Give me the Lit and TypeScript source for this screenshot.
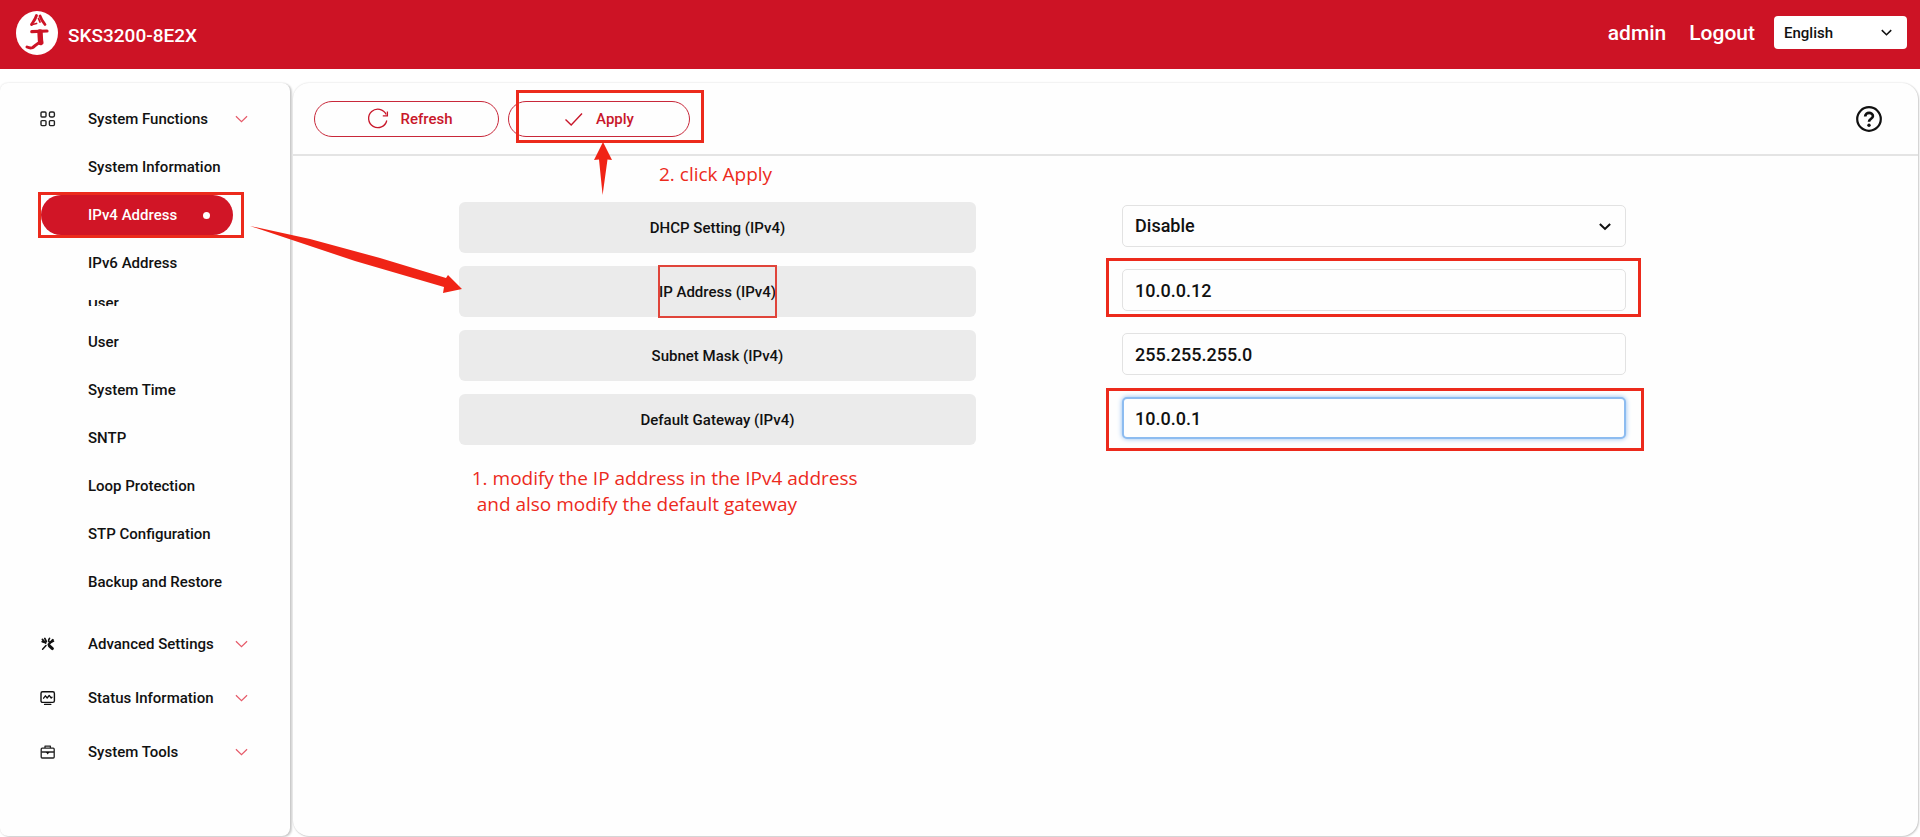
import { LitElement, html, css, svg, nothing } from "lit";
import { customElement, state } from "lit/decorators.js";
import { classMap } from "lit/directives/class-map.js";

interface NavItem {
  label: string;
  clipped?: boolean;
}

interface NavGroup {
  label: string;
  icon: unknown;
  items: NavItem[];
}

interface Field {
  id: string;
  label: string;
  value: string;
  options?: string[];
  mark?: "address" | "gateway";
  active?: boolean;
}

const gridIcon = svg`
  <g fill="none" stroke="#222" stroke-width="1.4">
    <rect x="1" y="1" width="5" height="5" rx="1"/><rect x="9.4" y="1" width="5" height="5" rx="1.4"/>
    <rect x="1" y="9.6" width="5" height="5" rx="1"/><rect x="9.4" y="9.6" width="5" height="5" rx="1"/>
  </g>`;
const toolsIcon = svg`
  <g fill="none" stroke="#111" stroke-linecap="round" stroke-linejoin="round">
    <path d="M2.6 13.2 6 9.6" stroke-width="1.5"/>
    <path d="M8.6 8.6 12.8 4" stroke-width="2.2"/>
    <path d="M9.6 2.2C8.4 3.6 8.4 5 9.2 6.2M13.6 5.2C12 6.4 11 6.4 10 6" stroke-width="1.5"/>
    <path d="M2.4 3.4 5.6 7M4.8 2.4 6.4 5.6M2.2 5.6 5.4 6.6" stroke-width="1.7"/>
    <path d="M9.4 9.8 12.4 12.6" stroke-width="3"/>
  </g>`;
const monitorIcon = svg`
  <g fill="none" stroke="#111" stroke-linecap="round" stroke-linejoin="round">
    <rect x="1" y="1.8" width="13.4" height="10.6" rx="1.6" stroke-width="1.4"/>
    <path d="M3.6 8.2 5.4 5.8 7.2 8 9.2 5.4 11.2 8 12 7.2" stroke-width="1.3"/>
    <path d="M4.6 14.4h6.2" stroke-width="1.4"/>
  </g>`;
const caseIcon = svg`
  <g fill="none" stroke="#222" stroke-linejoin="round">
    <rect x="1.2" y="4.2" width="13" height="9.8" rx="1" stroke-width="1.3"/>
    <path d="M5 4V2.2h5.4V4M1.4 8h12.6" stroke-width="1.3"/>
    <path d="M5.8 8h3.8L7.7 10.6Z" fill="#111" stroke="none"/>
  </g>`;

const chevron = (cls: string) => html`
  <svg class=${cls} viewBox="0 0 14 8" aria-hidden="true">
    <path d="M1 1 7 6.8 13 1" fill="none" stroke="currentColor" />
  </svg>`;

@customElement("app-root")
export class AppRoot extends LitElement {
  @state() private current = "IPv4 Address";

  private groups: NavGroup[] = [
    {
      label: "System Functions",
      icon: gridIcon,
      items: [
        { label: "System Information" },
        { label: "IPv4 Address" },
        { label: "IPv6 Address" },
        { label: "User", clipped: true },
        { label: "User" },
        { label: "System Time" },
        { label: "SNTP" },
        { label: "Loop Protection" },
        { label: "STP Configuration" },
        { label: "Backup and Restore" },
      ],
    },
    { label: "Advanced Settings", icon: toolsIcon, items: [] },
    { label: "Status Information", icon: monitorIcon, items: [] },
    { label: "System Tools", icon: caseIcon, items: [] },
  ];

  private fields: Field[] = [
    { id: "dhcp", label: "DHCP Setting (IPv4)", value: "Disable", options: ["Disable", "Enable"] },
    { id: "address", label: "IP Address (IPv4)", value: "10.0.0.12", mark: "address" },
    { id: "mask", label: "Subnet Mask (IPv4)", value: "255.255.255.0" },
    { id: "gateway", label: "Default Gateway (IPv4)", value: "10.0.0.1", mark: "gateway", active: true },
  ];

  static styles = css`
    :host {
      display: flex;
      flex-direction: column;
      min-height: 100vh;
      box-sizing: border-box;
      background: #fff;
      color: #111;
      font: 500 15px/20px Roboto, "Liberation Sans", sans-serif;
    }
    *, *::before, *::after { box-sizing: border-box; }
    button, input, select { font: inherit; color: inherit; }
    a { color: inherit; text-decoration: none; }
    svg { display: block; flex: none; overflow: visible; }

    .header {
      display: flex;
      align-items: center;
      height: 69px;
      padding: 0 13px 4px 16px;
      background: #cd1325;
      color: #fff;
      font-size: 21px;
      line-height: 24px;
    }
    .logo { width: 42px; height: 44px; }
    .model { margin: 0; padding: 6px 0 0 10px; font-size: 19px; font-weight: 500; }
    .account { display: flex; align-items: center; gap: 23px; margin-left: auto; }
    .language { position: relative; display: block; margin-left: -4px; color: #111; }
    .language select {
      display: block;
      width: 133px;
      height: 33px;
      padding: 0 10px;
      border: 0;
      border-radius: 4px;
      appearance: none;
      background: #fff;
      font-size: 15px;
    }
    .language .caret { position: absolute; right: 15px; top: 13px; width: 11px; height: 7px; stroke-width: 2; }

    .body { flex: 1; display: flex; gap: 3px; padding: 14px 2px 1px 0; }
    .sidebar {
      flex: none;
      width: 290px;
      padding: 9px 0;
      border-radius: 8px;
      background: #fefefe;
      box-shadow: 0 0 2px rgba(0, 0, 0, 0.15), 2px 1px 2px rgba(0, 0, 0, 0.18);
      white-space: nowrap;
    }
    .list { margin: 0; padding: 0; list-style: none; }
    .group {
      display: flex;
      align-items: center;
      width: 100%;
      height: 54px;
      padding: 0 42px 0 40px;
      border: 0;
      background: none;
      text-align: left;
    }
    .group svg:first-child { width: 16px; height: 16px; margin-right: 32px; }
    .group .caret { width: 13px; height: 8px; margin-left: auto; color: #e65a69; stroke-width: 1.3; }
    .list.items { margin-top: -3px; padding-bottom: 11px; }
    .item { display: flex; align-items: center; height: 48px; padding-left: 41px; }
    .link {
      position: relative;
      display: flex;
      align-items: center;
      justify-content: space-between;
      width: 192px;
      height: 40px;
      padding: 0 23px 0 47px;
      border-radius: 20px;
    }
    .link.current { background: #d11526; color: #fff; }
    .dot { width: 7px; height: 7px; border-radius: 50%; background: #fff; }
    .item.clipped { height: 31px; }
    .item.clipped .link { height: 6px; overflow: hidden; border-radius: 0; }

    .panel {
      flex: 1;
      min-width: 0;
      border-radius: 16px;
      background: #fefefe;
      box-shadow: 0 0 2px rgba(0, 0, 0, 0.15), 1px 1px 2px rgba(0, 0, 0, 0.18);
    }
    .toolbar {
      display: flex;
      align-items: center;
      gap: 9px;
      height: 73px;
      padding: 0 36px 0 21px;
      border-bottom: 2px solid #e4e4e4;
    }
    .action {
      display: flex;
      align-items: center;
      justify-content: center;
      gap: 12px;
      width: 182px;
      height: 36px;
      padding: 0;
      border: 1px solid #c8283a;
      border-radius: 18px;
      background: none;
      color: #c8172a;
    }
    .action.refresh { width: 185px; padding-left: 8px; }
    .action svg { width: 20px; height: 20px; }
    .marked { position: relative; }
    .help { margin-left: auto; padding: 0; border: 0; background: none; }
    .help svg { width: 26px; height: 26px; }

    .form {
      display: grid;
      gap: 13px;
      padding: 46px 18% 0 10.2%;
    }
    .row {
      display: grid;
      grid-template-columns: 517fr 503fr;
      column-gap: 12.5%;
      align-items: start;
    }
    .label {
      display: flex;
      align-items: center;
      justify-content: center;
      height: 51px;
      border-radius: 6px;
      background: #ebebeb;
    }
    .boxed {
      display: flex;
      align-items: center;
      height: 51px;
      outline: 2px solid #e0443a;
      outline-offset: -1px;
    }
    .control { position: relative; margin-top: 3px; font-size: 18px; }
    .control input, .control select {
      display: block;
      width: 100%;
      height: 42px;
      padding: 0 12px;
      border: 1px solid #e2e2e2;
      border-radius: 5px;
      outline: none;
      background: #fefefe;
      appearance: none;
    }
    .control .active { border: 2px solid #8dbcf0; padding: 0 11px; box-shadow: 0 0 5px #8dbcf0; }
    .control .caret { position: absolute; right: 15px; top: 18px; width: 12px; height: 7px; stroke-width: 2.4; }

    .mark { position: absolute; border: 3px solid #ec2a1c; pointer-events: none; }
    .mark.nav { inset: -3px -11px -3px -3px; }
    .mark.apply { inset: -11px -14px -6px 8px; }
    .mark.address { inset: -11px -15px -6px -16px; }
    .mark.gateway { inset: -9px -18px -12px -16px; }
    .arrow { position: absolute; z-index: 1; fill: #f02416; pointer-events: none; }
    .arrow.across { left: 209px; top: 31px; width: 213px; height: 68px; }
    .arrow.up { left: 86px; top: 41px; width: 18px; height: 53px; }
    .note {
      margin: 0;
      color: #ec2a1c;
      font: 400 19px/26px "Open Sans", "Noto Sans", sans-serif;
      white-space: pre;
    }
    .note.second { position: absolute; left: 151px; top: 60px; }
    .note.first { padding: 7px 0 0 13px; }
  `;

  private renderItem(item: NavItem) {
    const current = item.label === this.current;
    return html`
      <li class=${classMap({ item: true, clipped: !!item.clipped })}>
        <a
          class=${classMap({ link: true, current })}
          href="#"
          @click=${(e: Event) => {
            e.preventDefault();
            this.current = item.label;
          }}
        >
          <span>${item.label}</span>
          ${current
            ? html`<span class="dot"></span>
                <span class="mark nav"></span>
                <svg class="arrow across" viewBox="0 0 213 68" aria-hidden="true">
                  <path d="M0 0 60 13 130 32 196 52 198 49 212 63 193 67 194 61 105 35Z" />
                </svg>`
            : nothing}
        </a>
      </li>`;
  }

  private renderField(f: Field) {
    return html`
      <div class="row">
        <label class="label" for=${f.id}>
          <span class=${classMap({ boxed: f.mark === "address" })}>${f.label}</span>
        </label>
        <div class="control">
          ${f.options
            ? html`<select id=${f.id}>${f.options.map((o) => html`<option>${o}</option>`)}</select>${chevron("caret")}`
            : html`<input id=${f.id} type="text" class=${classMap({ active: !!f.active })} .value=${f.value} />`}
          ${f.mark ? html`<span class="mark ${f.mark}"></span>` : nothing}
        </div>
      </div>`;
  }

  render() {
    return html`
      <header class="header">
        <svg class="logo" viewBox="0 0 42 44" aria-hidden="true">
          <ellipse cx="21" cy="22" rx="21" ry="22" fill="#fff" />
          <g fill="none" stroke="#cd1325" stroke-linecap="round" stroke-linejoin="round">
            <path d="M20.5 4.5C19.5 8 17.5 10.5 15.5 13.5M24 5C25 8 27 11 29 13.5" stroke-width="2.8" />
            <path d="M16.5 13.5 20.5 12.5M22.5 7.5 24 11" stroke-width="1.8" />
            <path d="M15.8 20.6 31 20" stroke-width="3.2" />
            <path d="M24 21C24.4 26 24.2 29 24.8 31.5" stroke-width="5.4" />
            <path d="M25 31.5C20.5 32 19 35.5 16.5 36.6 14.5 37.4 13 37 11 36" stroke-width="3" />
          </g>
        </svg>
        <h1 class="model">SKS3200-8E2X</h1>
        <div class="account">
          <span>admin</span>
          <a href="#">Logout</a>
          <label class="language">
            <select aria-label="Language"><option>English</option></select>
            ${chevron("caret")}
          </label>
        </div>
      </header>
      <div class="body">
        <nav class="sidebar">
          <ul class="list">
            ${this.groups.map(
              (g) => html`<li>
                <button class="group" type="button">
                  <svg viewBox="0 0 16 16" aria-hidden="true">${g.icon}</svg>
                  <span>${g.label}</span>
                  ${chevron("caret")}
                </button>
                ${g.items.length
                  ? html`<ul class="list items">${g.items.map((i) => this.renderItem(i))}</ul>`
                  : nothing}
              </li>`
            )}
          </ul>
        </nav>
        <main class="panel">
          <div class="toolbar">
            <button class="action refresh" type="button">
              <svg viewBox="0 0 20 20" fill="none" stroke="currentColor" stroke-width="1.3" aria-hidden="true">
                <path d="M18.8 11.5A9.2 9.2 0 1 1 18.2 5.6" />
                <path d="M19.4 2.6V6.8H14.8" />
              </svg>
              Refresh
            </button>
            <div class="marked">
              <button class="action" type="button">
                <svg viewBox="0 0 20 20" fill="none" stroke="currentColor" stroke-width="1.4" aria-hidden="true">
                  <path d="M1.5 10.5 7.2 16 18 4.5" />
                </svg>
                Apply
              </button>
              <span class="mark apply"></span>
              <svg class="arrow up" viewBox="0 0 18 53" aria-hidden="true">
                <path d="M9 0 18 18 13.5 17.4 8.6 53 5 17.4 0 18Z" />
              </svg>
              <p class="note second">2. click Apply</p>
            </div>
            <button class="help" type="button" aria-label="Help">
              <svg viewBox="0 0 26 26" fill="none" stroke="#111" aria-hidden="true">
                <circle cx="13" cy="13" r="11.8" stroke-width="2.2" />
                <path d="M9.2 10.4C9.2 5.6 17 5.8 16.9 10.2 16.8 12.8 13 12.8 13 15.8" stroke-width="2.7" />
                <circle cx="13" cy="19.2" r="1.7" fill="#111" stroke="none" />
              </svg>
            </button>
          </div>
          <form class="form" @submit=${(e: Event) => e.preventDefault()}>
            ${this.fields.map((f) => this.renderField(f))}
            <p class="note first">1. modify the IP address in the IPv4 address
 and also modify the default gateway</p>
          </form>
        </main>
      </div>
    `;
  }
}
